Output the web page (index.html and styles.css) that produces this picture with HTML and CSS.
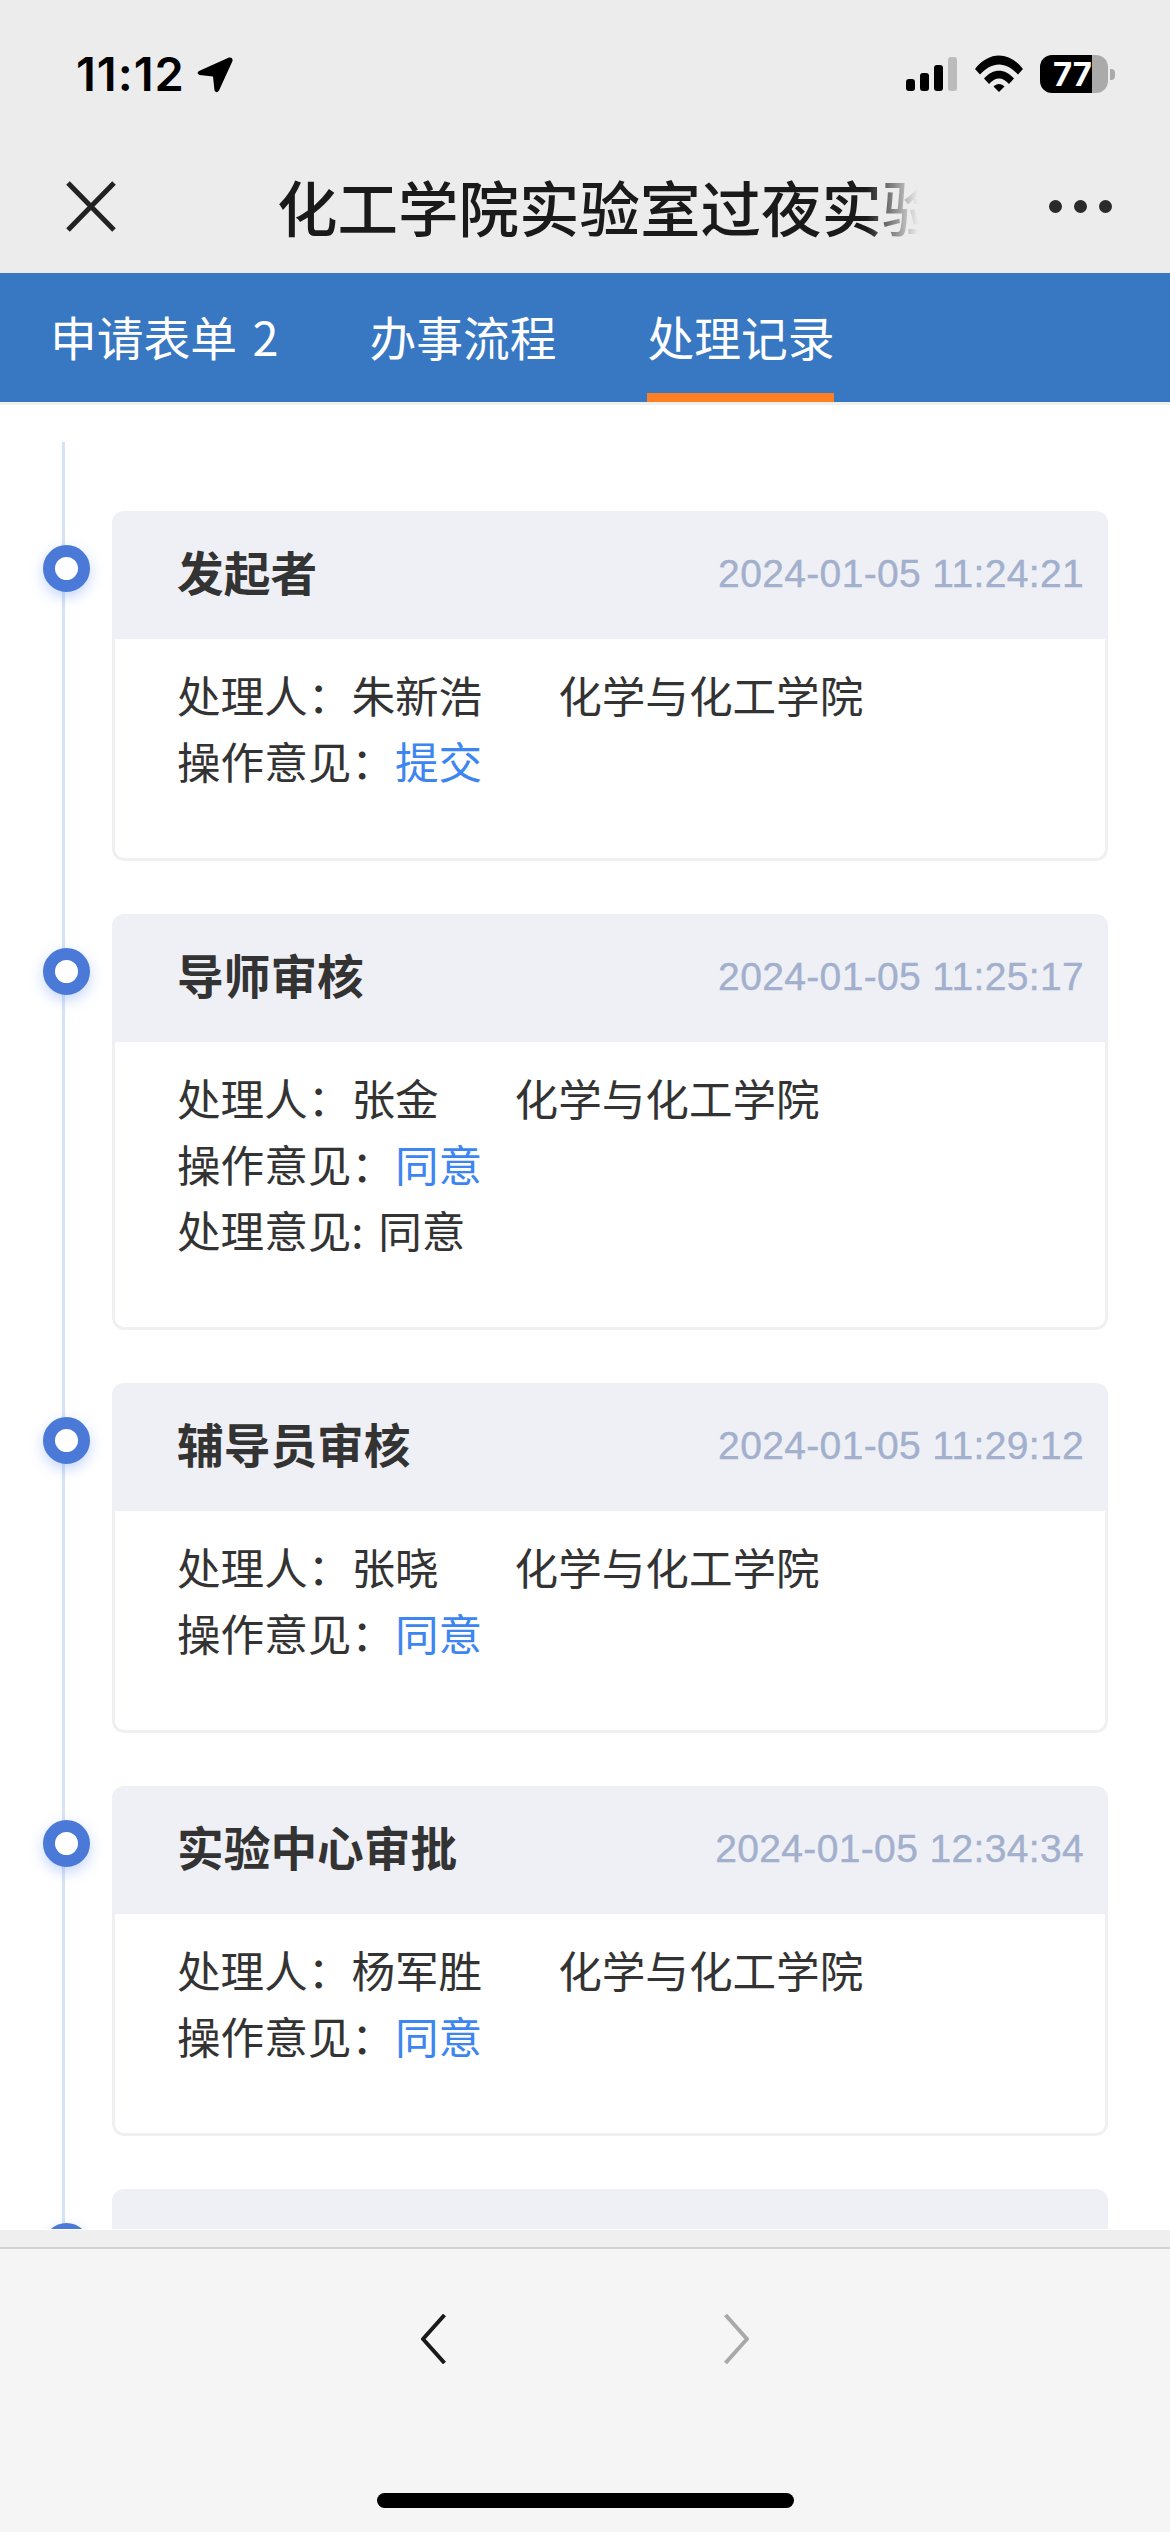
FILE: index.html
```html
<!DOCTYPE html>
<html lang="zh-CN">
<head>
<meta charset="utf-8">
<title>处理记录</title>
<link rel="stylesheet" href="styles.css">
</head>
<body>
<div class="app">
  <header class="top">
    <div class="status">
      <div class="status-left">
        <span class="time">11:12</span>
        <svg class="loc" viewBox="0 0 36 36"><path d="M32 0.5 L2 14 Q-1 16.5 2.5 18 L16 19.5 L17.5 33.5 Q19.5 37 22 33.5 L35.5 4 Q36 0 32 0.5 Z" fill="#000"/></svg>
      </div>
      <div class="status-right">
        <div class="signal"><i class="b1"></i><i class="b2"></i><i class="b3"></i><i class="b4"></i></div>
        <svg class="wifi" viewBox="0 0 48 37"><path d="M0 14 C14 -4 34 -4 48 14 L43 19.5 C31 6 17 6 5 19.5 Z" fill="#000"/><path d="M9 23.5 C18 13 30 13 39 23.5 L34 29 C28 21.5 20 21.5 14 29 Z" fill="#000"/><path d="M18.5 31.5 C21.5 28 26.5 28 29.5 31.5 L24 37 Z" fill="#000"/></svg>
        <div class="battery"><div class="bat-body"><span class="bat-fill">77</span><span class="bat-empty"></span></div><span class="bat-nub"></span></div>
      </div>
    </div>
    <nav class="nav">
      <svg class="close" viewBox="0 0 50 51"><path d="M2 2 L48 49 M48 2 L2 49" stroke="#222" stroke-width="5" fill="none"/></svg>
      <div class="nav-title"><span>化工学院实验室过夜实验申请</span></div>
      <div class="more"><i></i><i></i><i></i></div>
    </nav>
  </header>
  <div class="tabs">
    <div class="tab">申请表单 2</div>
    <div class="tab">办事流程</div>
    <div class="tab active">处理记录</div>
  </div>
  <main class="content">
    <div class="timeline">
      <section class="item">
        <span class="dot"></span>
        <div class="card">
          <div class="card-head"><h3>发起者</h3><time>2024-01-05 11:24:21</time></div>
          <div class="card-body">
            <p>处理人：<span>朱新浩</span><span class="dept">化学与化工学院</span></p>
            <p>操作意见：<span class="blue">提交</span></p>
          </div>
        </div>
      </section>
      <section class="item">
        <span class="dot"></span>
        <div class="card">
          <div class="card-head"><h3>导师审核</h3><time>2024-01-05 11:25:17</time></div>
          <div class="card-body">
            <p>处理人：<span>张金</span><span class="dept">化学与化工学院</span></p>
            <p>操作意见：<span class="blue">同意</span></p>
            <p>处理意见: 同意</p>
          </div>
        </div>
      </section>
      <section class="item">
        <span class="dot"></span>
        <div class="card">
          <div class="card-head"><h3>辅导员审核</h3><time>2024-01-05 11:29:12</time></div>
          <div class="card-body">
            <p>处理人：<span>张晓</span><span class="dept">化学与化工学院</span></p>
            <p>操作意见：<span class="blue">同意</span></p>
          </div>
        </div>
      </section>
      <section class="item">
        <span class="dot"></span>
        <div class="card">
          <div class="card-head"><h3>实验中心审批</h3><time>2024-01-05 12:34:34</time></div>
          <div class="card-body">
            <p>处理人：<span>杨军胜</span><span class="dept">化学与化工学院</span></p>
            <p>操作意见：<span class="blue">同意</span></p>
          </div>
        </div>
      </section>
      <section class="item">
        <span class="dot"></span>
        <div class="card">
          <div class="card-head"></div>
        </div>
      </section>
    </div>
  </main>
  <footer class="footer">
    <div class="strip"></div>
    <div class="arrows">
      <svg class="arrow" viewBox="0 0 25 50"><path d="M23.5 1 L2 25 L23.5 49" stroke="#1a1a1a" stroke-width="4" fill="none" stroke-linejoin="round"/></svg>
      <svg class="arrow" viewBox="0 0 25 50"><path d="M1.5 1 L23 25 L1.5 49" stroke="#a9a9a9" stroke-width="4" fill="none" stroke-linejoin="round"/></svg>
    </div>
    <div class="home"></div>
  </footer>
</div>
</body>
</html>
```

FILE: styles.css
```css
* { box-sizing: border-box; }
html, body { margin: 0; padding: 0; }
body {
  width: 1170px;
  height: 2532px;
  overflow: hidden;
  background: #fff;
  font-family: "Noto Sans CJK SC", "Noto Sans", sans-serif;
  color: #333;
}
.app { display: flex; flex-direction: column; height: 2532px; }

.top { background: #ececec; height: 273px; flex: none; display: flex; flex-direction: column; }
.status {
  height: 139px;
  display: flex;
  justify-content: space-between;
  padding: 55px 55px 0 76px;
}
.status-left { display: flex; align-items: flex-start; gap: 12px; height: 38px; }
.time {
  font-family: Inter, "Liberation Sans", sans-serif;
  font-weight: 600;
  font-size: 47px;
  line-height: 38px;
  color: #000;
  letter-spacing: 1px;
}
.loc { width: 36px; height: 36px; margin-top: 2px; }
.status-right { display: flex; align-items: flex-start; }
.signal { display: flex; align-items: flex-end; gap: 5px; height: 36px; width: 52px; margin-right: 17px; }
.signal i { display: block; width: 9px; background: #000; border-radius: 3px; }
.signal .b1 { height: 12px; }
.signal .b2 { height: 18px; }
.signal .b3 { height: 26px; }
.signal .b4 { height: 34px; background: #bcbcbc; }
.wifi { width: 48px; height: 37px; margin-right: 17px; }
.battery { display: flex; align-items: center; height: 38px; }
.bat-body { display: flex; width: 68px; height: 38px; border-radius: 12px; overflow: hidden; }
.bat-fill {
  width: 52px;
  background: #000;
  color: #fff;
  font-family: Inter, "Liberation Sans", sans-serif;
  font-weight: 700;
  font-size: 33px;
  line-height: 38px;
  text-align: right;
}
.bat-empty { flex: 1; background: #aaa; }
.bat-nub { width: 5px; height: 11px; margin-left: 2px; background: #aaa; border-radius: 0 4px 4px 0; }

.nav { height: 134px; display: flex; align-items: center; padding: 0 58px 0 66px; }
.close { width: 50px; height: 51px; flex: none; }
.nav-title {
  width: 641px;
  margin-left: 161px;
  overflow: hidden;
  white-space: nowrap;
  font-size: 60.5px;
  font-weight: 500;
  line-height: 80px;
  color: #1a1a1a;
  -webkit-mask-image: linear-gradient(to right, #000 92%, transparent 100%);
  mask-image: linear-gradient(to right, #000 92%, transparent 100%);
}
.more { margin-left: auto; display: flex; gap: 12px; }
.more i { display: block; width: 13px; height: 13px; border-radius: 50%; background: #2a2a2a; }

.tabs {
  flex: none;
  height: 132px;
  background: #3877c2;
  border-bottom: 3px solid #f0f0f0;
  display: flex;
  gap: 91px;
  padding-left: 50px;
}
.tab {
  position: relative;
  height: 129px;
  line-height: 126px;
  font-size: 46.75px;
  color: #fff;
  white-space: nowrap;
  word-spacing: 5px;
}
.tab.active::after {
  content: "";
  position: absolute;
  left: 0;
  right: 0;
  bottom: 0;
  height: 9px;
  background: #ff7f24;
}

.content { flex: 1; min-height: 0; overflow: hidden; background: #fff; }
.timeline { position: relative; padding: 106px 62px 0 112px; }
.timeline::before {
  content: "";
  position: absolute;
  left: 62px;
  top: 37px;
  bottom: 0;
  width: 3px;
  background: #d6e3f7;
}
.item { position: relative; margin-bottom: 53px; }
.dot {
  position: absolute;
  left: -69px;
  top: 34px;
  width: 47px;
  height: 47px;
  border-radius: 50%;
  background: #fff;
  border: 12px solid #4b79d8;
  box-shadow: 0 5px 14px rgba(70, 125, 245, 0.32);
}
.card { border-radius: 12px; overflow: hidden; background: #fff; }
.card-head {
  height: 128px;
  padding: 0 24px 0 65px;
  background: #eff0f5;
  display: flex;
  align-items: center;
  justify-content: space-between;
}
.card-head h3 { margin: -8px 0 0; font-size: 46.7px; font-weight: 700; line-height: 60px; color: #333; }
.card-head time {
  font-family: "Liberation Sans", Inter, sans-serif;
  font-size: 39px;
  font-weight: 400;
  letter-spacing: 0.35px;
  -webkit-text-stroke: 0.4px #a2b0cd;
  color: #a2b0cd;
  white-space: nowrap;
  margin-top: -2px;
}
.card-body {
  padding: 22px 0 65px 62px;
  border: 3px solid #f0f0f2;
  border-top: 0;
  border-radius: 0 0 12px 12px;
}
.card-body p { margin: 0; font-size: 43.6px; line-height: 66px; color: #333; white-space: nowrap; word-spacing: 5px; }
.dept { margin-left: 76px; }
.blue { color: #3d85f0; }

.footer { flex: none; height: 303px; background: #f5f5f5; display: flex; flex-direction: column; align-items: center; }
.strip { align-self: stretch; height: 20px; background: #efefef; border-top: 1px solid #fff; border-bottom: 2px solid #d2d2d2; }
.arrows { display: flex; gap: 278px; margin-top: 65px; }
.arrow { width: 25px; height: 50px; display: block; }
.home { width: 417px; height: 15px; margin-top: 129px; background: #000; border-radius: 8px; }
```
